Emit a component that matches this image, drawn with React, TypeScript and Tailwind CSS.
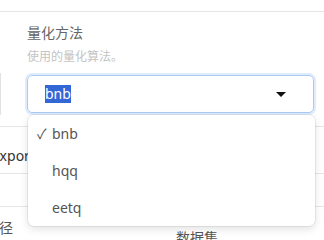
const options = ["bnb", "hqq", "eetq"];

function Caret() {
  return (
    <svg width="10" height="5" viewBox="0 0 10 5" className="ml-auto">
      <path d="M0 0h10L5 5z" fill="#111" />
    </svg>
  );
}

export default function App() {
  return (
    <div className="relative h-[240px] w-[324px] overflow-hidden bg-white font-['Noto_Sans','Noto_Sans_CJK_SC',sans-serif]">
      <div className="h-[11px]" />
      <div className="border-t border-[#e6e6e6] pt-[11px]">
        <div className="pl-[27px] text-[14px] leading-5 text-[#666]">量化方法</div>
        <div className="mt-[6px] pl-[27px] text-[12px] leading-4 text-[#c4c4c4]">使用的量化算法。</div>
        <div className="mt-[8px] flex items-center">
          <div className="h-[42px] w-px bg-[#e2e2e2]" />
          <div className="ml-[26px] flex h-[38px] w-[287px] items-center rounded-[5px] border border-[#a8cbf5] pl-[17px] pr-[27px] ring-2 ring-[#e0ecfd]">
            <span className="bg-[#3367d6] text-[14px] leading-[18px] text-white">bnb</span>
            <Caret />
          </div>
        </div>
      </div>

      <div className="mt-[11px] border-t border-[#e6e6e6]">
        <div className="h-[46px] overflow-hidden whitespace-nowrap pt-[19px] text-[14px] leading-5 text-[#333]">
          <span className="-ml-[8px]">export</span>
        </div>
        <div className="h-[33px] border-t border-[#e6e6e6]" />
        <div className="flex h-[40px] border-t border-[#e6e6e6] text-[14px] leading-5 text-[#555]">
          <span className="-ml-[15px] pt-[11px]">路径</span>
          <span className="ml-[163px] pt-[21px]">数据集</span>
        </div>
      </div>

      <div className="absolute left-[28px] top-[115px] w-[287px] overflow-hidden rounded-[6px] bg-white shadow-[0_0_0_1px_rgba(0,0,0,0.06),0_3px_8px_rgba(0,0,0,0.12)]">
        {options.map((o, i) => (
          <div key={o} className="flex h-[37px] items-center pl-[9px] text-[14px] text-[#555]">
            <span className="w-[15px] text-[#555]">{i === 0 ? "✓" : ""}</span>
            <span>{o}</span>
          </div>
        ))}
      </div>
    </div>
  );
}
